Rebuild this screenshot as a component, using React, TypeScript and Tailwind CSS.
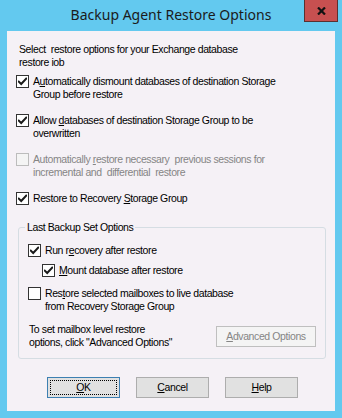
import React from 'react';

const Check = () => (
  <svg width="9" height="9" viewBox="0 0 9 9" className="block">
    <path d="M0.8 4.6 L3.2 7 L8.2 1.6" fill="none" stroke="#1a1a1a" strokeWidth="2" strokeLinecap="square" />
  </svg>
);

interface BoxProps {
  checked?: boolean;
  disabled?: boolean;
}

const Box = ({ checked, disabled }: BoxProps) => (
  <span
    className={`flex h-[13px] w-[13px] shrink-0 items-center justify-center border ${
      disabled ? 'border-[#bcbcbc] bg-[#f4f4f4]' : 'border-[#333] bg-white'
    }`}
  >
    {checked && <Check />}
  </span>
);

interface OptionProps {
  checked?: boolean;
  disabled?: boolean;
  className?: string;
  children: React.ReactNode;
}

const Option = ({ checked, disabled, className = '', children }: OptionProps) => (
  <div className={`flex items-start gap-[4px] ${className}`}>
    <Box checked={checked} disabled={disabled} />
    <div className={disabled ? 'text-[#858585]' : ''}>{children}</div>
  </div>
);

const DlgButton = ({ children, focused }: { children: React.ReactNode; focused?: boolean }) => (
  <div
    className={`h-[21px] w-[73px] bg-[#e1e1e1] border ${
      focused ? 'border-[#3c7fb1] p-[2px]' : 'border-[#adadad]'
    }`}
  >
    <div
      className={`flex h-full items-center justify-center ${
        focused ? 'border border-dotted border-black' : ''
      }`}
    >
      {children}
    </div>
  </div>
);

export default function App() {
  return (
    <div className="flex h-[418px] w-[342px] flex-col bg-[#63c9ef]">
      {/* title bar */}
      <div className="grid h-[31px] shrink-0 grid-cols-[1fr_auto_1fr]">
        <div />
        <div className="self-center pb-[1px] font-['Noto_Sans',sans-serif] text-[14px] leading-[18px] text-[#1b1b1b]">
          Backup Agent Restore Options
        </div>
        <div className="mr-[4px] flex h-[22px] w-[34px] items-center justify-center justify-self-end border border-t-0 border-[#5a3030] bg-[#c75050]">
          <svg width="9" height="8" viewBox="0 0 9 8">
            <path d="M1 0.5 L8 7.5 M8 0.5 L1 7.5" stroke="#111" strokeWidth="2.2" />
          </svg>
        </div>
      </div>

      {/* client area */}
      <div className="mx-[7px] flex h-[380px] flex-col bg-[#f5f1f6] pl-[9px] pt-[12px] font-['Liberation_Sans',Arial,sans-serif] text-[10.5px] leading-[13px] tracking-[-0.4px] text-black">
        <div className="ml-[3px]">
          Select&nbsp; restore options for your Exchange database
          <br />
          restore iob
        </div>

        <Option checked className="mt-[6px]">
          A<u>u</u>tomatically dismount databases of destination Storage
          <br />
          Group before restore
        </Option>

        <Option checked className="mt-[13px]">
          Allow <u>d</u>atabases of destination Storage Group to be
          <br />
          overwritten
        </Option>

        <Option disabled className="mt-[13px]">
          Automatically <u>r</u>estore necessary&nbsp; previous sessions for
          <br />
          incremental and&nbsp; differential&nbsp; restore
        </Option>

        <Option checked className="mt-[13px]">
          Restore to Recovery <u>S</u>torage Group
        </Option>

        <fieldset className="ml-[2px] mt-[16px] w-[308px] rounded-[3px] border border-[#d5dde3] pb-[9px]">
          <legend className="ml-[6px] px-[2px]">Last Backup Set Options</legend>

          <Option checked className="ml-[9px] mt-[10px]">
            Run r<u>e</u>covery after restore
          </Option>

          <Option checked className="ml-[23px] mt-[7px]">
            <u>M</u>ount database after restore
          </Option>

          <Option className="ml-[9px] mt-[10px]">
            Res<u>t</u>ore selected mailboxes to live database
            <br />
            from Recovery Storage Group
          </Option>

          <div className="mt-[10px] ml-[10px] mr-[9px] flex items-start justify-between">
            <div>
              To set mailbox level restore
              <br />
              options, click "Advanced Options"
            </div>
            <div className="mt-[3px] flex h-[21px] w-[100px] items-center justify-center border border-[#bfbfbf] bg-[#f4f4f4] text-[#858585]">
              <span>
                <u>A</u>dvanced Options
              </span>
            </div>
          </div>
        </fieldset>

        <div className="ml-[31px] mt-[18px] flex gap-[16px]">
          <DlgButton focused>
            <u>O</u>K
          </DlgButton>
          <DlgButton>
            <u>C</u>ancel
          </DlgButton>
          <DlgButton>
            <u>H</u>elp
          </DlgButton>
        </div>
      </div>
    </div>
  );
}
